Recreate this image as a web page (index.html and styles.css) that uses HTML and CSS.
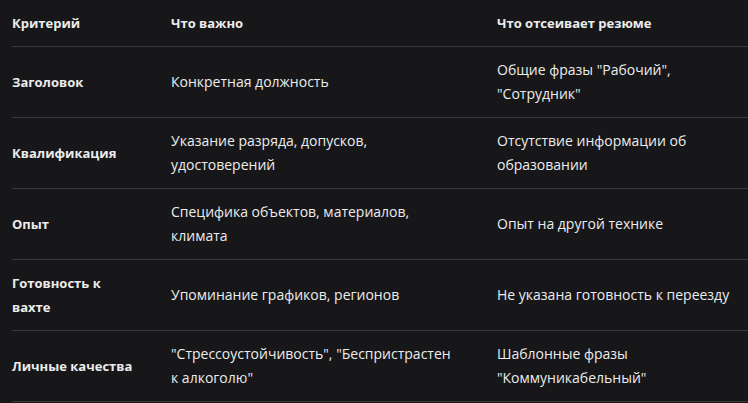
FILE: index.html
```html
<!DOCTYPE html>
<html lang="ru">
<head>
<meta charset="utf-8">
<link rel="stylesheet" href="styles.css">
</head>
<body>
<div class="table">
  <div class="row head">
    <div class="cell">Критерий</div>
    <div class="cell">Что важно</div>
    <div class="cell">Что отсеивает резюме</div>
  </div>
  <div class="row">
    <div class="cell key">Заголовок</div>
    <div class="cell">Конкретная должность</div>
    <div class="cell">Общие фразы "Рабочий", "Сотрудник"</div>
  </div>
  <div class="row">
    <div class="cell key">Квалификация</div>
    <div class="cell">Указание разряда, допусков, удостоверений</div>
    <div class="cell">Отсутствие информации об образовании</div>
  </div>
  <div class="row">
    <div class="cell key">Опыт</div>
    <div class="cell">Специфика объектов, материалов, климата</div>
    <div class="cell">Опыт на другой технике</div>
  </div>
  <div class="row">
    <div class="cell key">Готовность к вахте</div>
    <div class="cell">Упоминание графиков, регионов</div>
    <div class="cell">Не указана готовность к переезду</div>
  </div>
  <div class="row">
    <div class="cell key">Личные качества</div>
    <div class="cell">"Стрессоустойчивость", "Беспристрастен к алкоголю"</div>
    <div class="cell">Шаблонные фразы "Коммуникабельный"</div>
  </div>
</div>
</body>
</html>
```
FILE: styles.css
```css
html, body {
  margin: 0;
  background: #171719;
}
body {
  padding: 0 0 0 12px;
  font-family: "Open Sans", "Noto Sans", sans-serif;
  font-size: 14px;
  color: #ececec;
}
.table {
  display: flex;
  flex-direction: column;
}
.row {
  display: grid;
  grid-template-columns: 159px 326px 251px;
  border-bottom: 1px solid #3a3a3c;
  min-height: 70px;
}
.row.head {
  min-height: 44px;
  font-weight: 700;
  font-size: 13px;
}
.cell {
  display: flex;
  align-items: center;
  line-height: 24px;
  padding: 11px 0;
}
.cell:nth-child(1) {
  padding-right: 32px;
}
.cell:nth-child(2) {
  padding-right: 36px;
}
.cell:nth-child(3) {
  padding-right: 8px;
}
.key {
  font-weight: 700;
  font-size: 13px;
}
```
